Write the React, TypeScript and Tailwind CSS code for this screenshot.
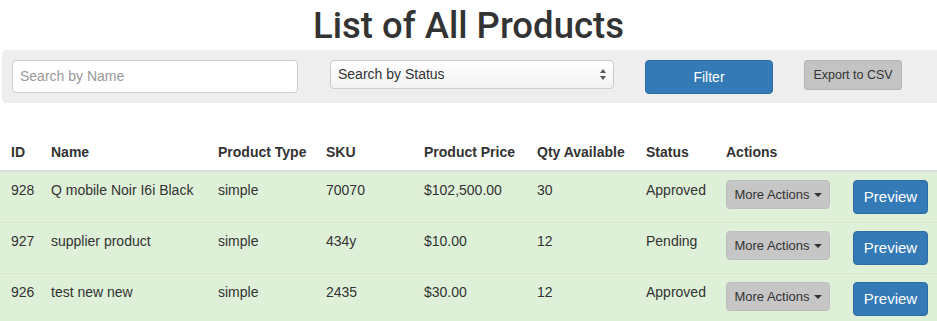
import React from "react";

const rows = [
  { id: "928", name: "Q mobile Noir I6i Black", type: "simple", sku: "70070", price: "$102,500.00", qty: "30", status: "Approved" },
  { id: "927", name: "supplier product", type: "simple", sku: "434y", price: "$10.00", qty: "12", status: "Pending" },
  { id: "926", name: "test new new", type: "simple", sku: "2435", price: "$30.00", qty: "12", status: "Approved" },
];

function Caret() {
  return (
    <svg width="8" height="4" viewBox="0 0 8 4" className="ml-[4px] inline-block">
      <path d="M0 0 L8 0 L4 4 Z" fill="#333" />
    </svg>
  );
}

export default function App() {
  return (
    <div className="w-[937px] h-[321px] overflow-hidden bg-white text-[#333]" style={{ fontFamily: '"Liberation Sans", Arial, Helvetica, sans-serif' }}>
      <h1 className="h-[50px] text-center font-['Roboto',_'Liberation_Sans',_sans-serif] text-[36.5px] font-medium leading-[51px] text-[#333]">
        List of All Products
      </h1>

      <div className="ml-[2px] flex h-[53px] items-start rounded-l-[4px] bg-[#eeeeee] pl-[10px] pt-[10px]">
        <div className="flex h-[33px] w-[286px] items-center rounded-[4px] border border-[#cccccc] bg-white pl-[7px] text-[14px] text-[#999]">
          Search by Name
        </div>
        <div className="ml-[32px] flex h-[29px] w-[284px] items-center justify-between rounded-[4px] border border-[#cccccc] bg-gradient-to-b from-[#ffffff] to-[#f3f3f3] pl-[7px] pr-[7px] text-[14px] text-[#333]">
          <span>Search by Status</span>
          <svg width="6" height="11" viewBox="0 0 6 11">
            <path d="M0 4 L3 0 L6 4 Z" fill="#555" />
            <path d="M0 7 L3 11 L6 7 Z" fill="#555" />
          </svg>
        </div>
        <div className="ml-[31px] flex h-[34px] w-[128px] items-center justify-center rounded-[4px] border border-[#2e6da4] bg-[#337ab7] text-[14px] text-white">
          Filter
        </div>
        <div className="ml-[31px] flex h-[30px] w-[98px] items-center justify-center rounded-[3px] border border-[#b5b5b5] bg-[#c3c3c3] text-[12.5px] text-[#333]">
          Export to CSV
        </div>
      </div>

      <table className="mt-[31px] w-[937px] table-fixed border-collapse text-[14px] leading-[20px]">
        <colgroup>
          <col className="w-[43px]" />
          <col className="w-[167px]" />
          <col className="w-[108px]" />
          <col className="w-[98px]" />
          <col className="w-[113px]" />
          <col className="w-[109px]" />
          <col className="w-[80px]" />
          <col className="w-[127px]" />
          <col className="w-[92px]" />
        </colgroup>
        <thead>
          <tr className="border-b-2 border-[#dddddd] text-left font-bold">
            <th className="py-[8px] pl-[11px] pr-0">ID</th>
            <th className="p-[8px]">Name</th>
            <th className="p-[8px]">Product Type</th>
            <th className="p-[8px]">SKU</th>
            <th className="p-[8px]">Product Price</th>
            <th className="p-[8px]">Qty Available</th>
            <th className="p-[8px]">Status</th>
            <th className="p-[8px]">Actions</th>
            <th className="p-[8px]"></th>
          </tr>
        </thead>
        <tbody>
          {rows.map((r, i) => (
            <tr key={r.id} className={`bg-[#dff0d8] align-top ${i > 0 ? "border-t border-[#d5e6cd]" : ""}`}>
              <td className="py-[8px] pl-[11px] pr-0">{r.id}</td>
              <td className="p-[8px]">{r.name}</td>
              <td className="p-[8px]">{r.type}</td>
              <td className="p-[8px]">{r.sku}</td>
              <td className="p-[8px]">{r.price}</td>
              <td className="p-[8px]">{r.qty}</td>
              <td className="p-[8px]">{r.status}</td>
              <td className="p-[8px]">
                <div className="flex h-[29px] w-[104px] items-center justify-center rounded-[4px] border border-[#bdbdbd] bg-[#c6c6c6] text-[13px] text-[#333]">
                  More Actions
                  <Caret />
                </div>
              </td>
              <td className="p-[8px]">
                <div className="flex h-[34px] w-[75px] items-center justify-center rounded-[4px] border border-[#2e6da4] bg-[#337ab7] text-[15px] text-white">
                  Preview
                </div>
              </td>
            </tr>
          ))}
        </tbody>
      </table>
    </div>
  );
}
